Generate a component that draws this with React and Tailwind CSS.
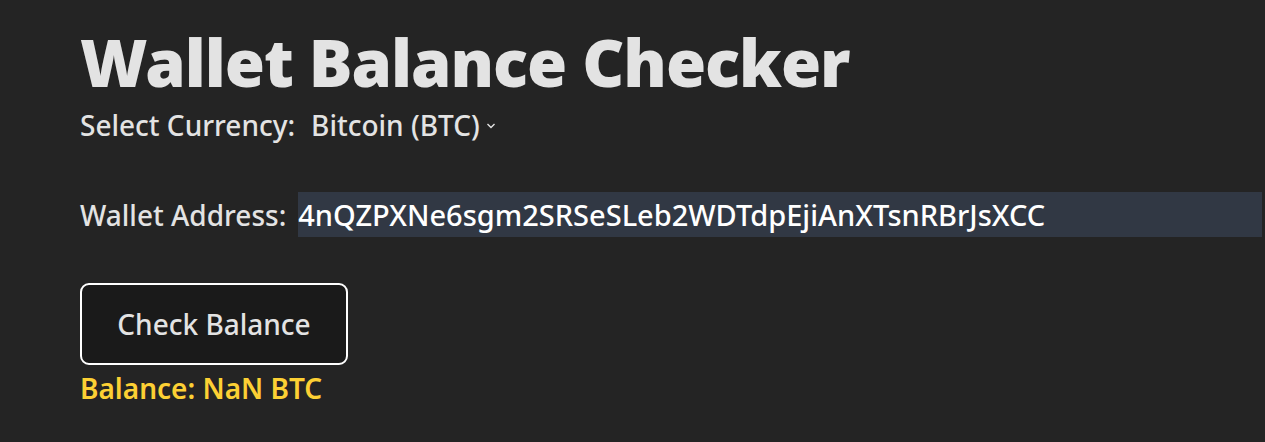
const App = () => {
  return (
    <div className="min-h-screen bg-[#242424] text-[#e3e3e3] font-['Noto_Sans',sans-serif] font-medium pl-20 pr-[3px] pt-[30px]">
      <h1 className="text-[65px] font-black leading-[1] tracking-[-1px]">Wallet Balance Checker</h1>
      <div className="flex items-center mt-[12px] text-[28px] leading-[36px]">
        <span>Select Currency:</span>
        <span className="ml-[16px]">Bitcoin (BTC)</span>
        <svg width="12" height="12" viewBox="0 0 12 12" className="ml-[5px] mt-[2px]">
          <path d="M2.5 4 L6 7.5 L9.5 4" fill="none" stroke="#e3e3e3" strokeWidth="1.4" />
        </svg>
      </div>
      <div className="flex items-center mt-[49px] text-[28px]">
        <span className="mr-[12px] whitespace-nowrap shrink-0">Wallet Address:</span>
        <div className="h-[45px] flex-1 min-w-0 bg-[#313844] flex items-center text-white text-[29px] whitespace-nowrap">
          4nQZPXNe6sgm2SRSeSLeb2WDTdpEjiAnXTsnRBrJsXCC
        </div>
      </div>
      <button className="mt-[46px] w-[268px] h-[82px] rounded-[9px] border-2 border-white bg-[#1a1a1a] text-[28px] text-[#e3e3e3]">
        Check Balance
      </button>
      <div className="text-[28px] leading-[36px] text-[#fcd034] font-semibold mt-[5px]">Balance: NaN BTC</div>
    </div>
  );
};

export default App;
